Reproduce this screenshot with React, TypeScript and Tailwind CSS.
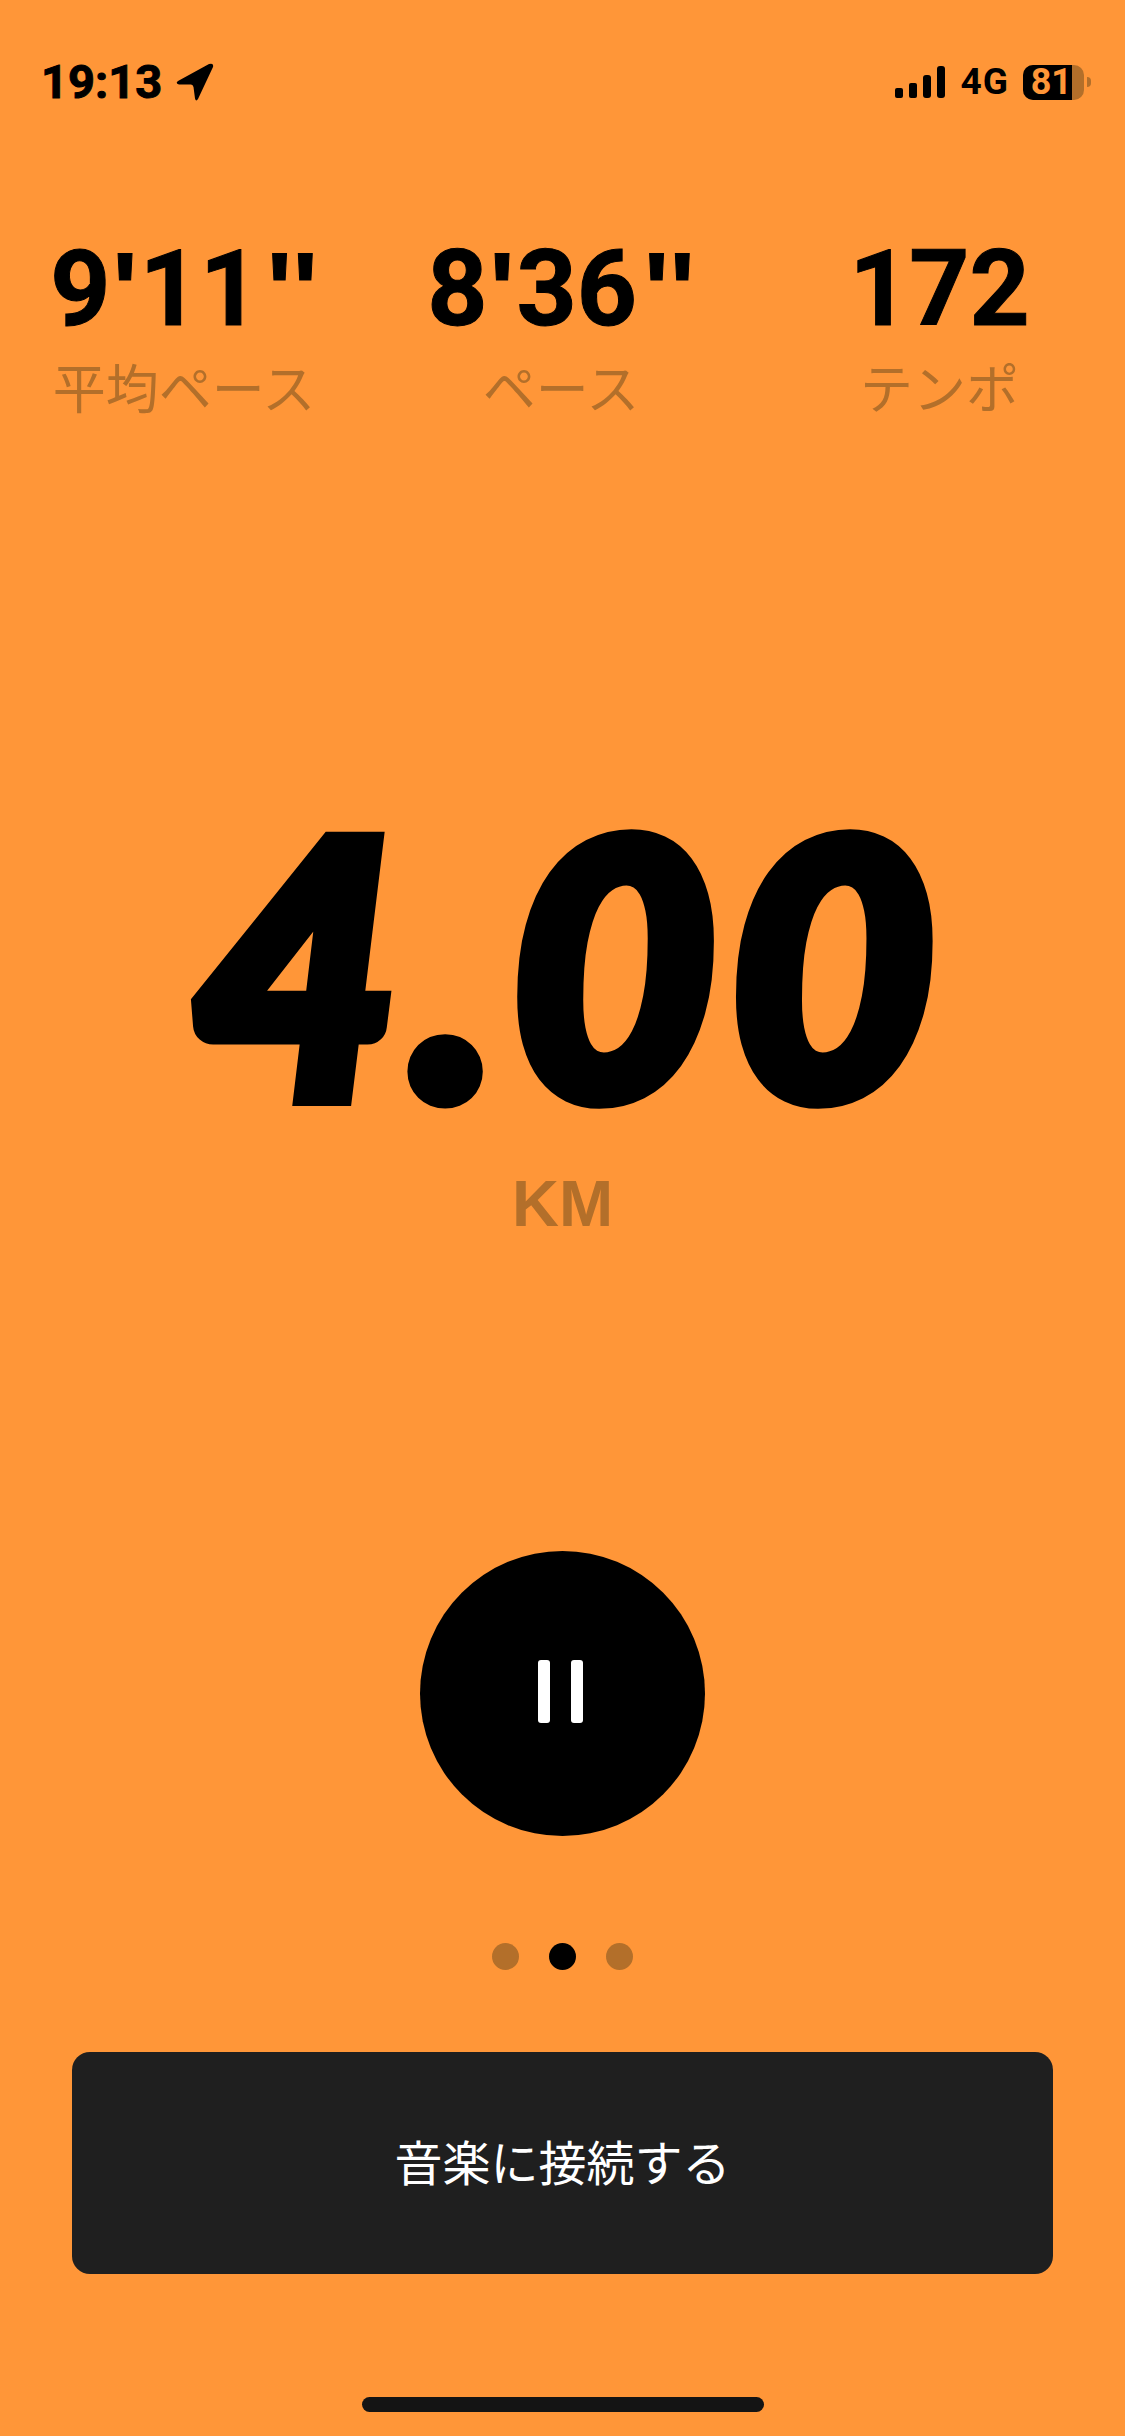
const SANS = "font-['Liberation_Sans','Noto_Sans_CJK_JP',sans-serif]";
const DIGITS = "font-['Roboto',sans-serif]";

function StatValue({ minutes, seconds }: { minutes: string; seconds: string }) {
  return (
    <span className={`${DIGITS} flex text-[105px] font-bold leading-[77px] text-black [-webkit-text-stroke:1px_#000]`}>
      {minutes}
      <span className={`${SANS} mx-[2px]`}>'</span>
      {seconds}
      <span className={`${SANS} ml-[7px]`}>'</span>
      <span className={`${SANS} ml-[1px]`}>'</span>
    </span>
  );
}

function StatusBar() {
  return (
    <div className="flex h-[38px] items-center justify-between pl-[41px] pr-[34px]">
      <div className="flex items-center gap-[14px]">
        <span className={`${DIGITS} text-[47px] font-bold leading-[38px] text-black [-webkit-text-stroke:1px_#000]`}>19:13</span>
        <svg width="38" height="38" viewBox="0 0 38 38" aria-hidden="true">
          <path
            d="M2 18 L33 1 Q38 -0.5 37 4 L22 36 Q20 39 19 35.5 L17.5 24 Q17 21.5 15 21.5 L3 21.5 Q-1 20.5 2 18 Z"
            fill="#000"
          />
        </svg>
      </div>
      <div className="flex items-center">
        <div className="flex h-[32px] items-end gap-[6px]">
          <div className="h-[10px] w-[8px] rounded-[2px] bg-black" />
          <div className="h-[15px] w-[8px] rounded-[2px] bg-black" />
          <div className="h-[23px] w-[8px] rounded-[3px] bg-black" />
          <div className="h-[32px] w-[8px] rounded-[3px] bg-black" />
        </div>
        <span className={`${DIGITS} ml-[16px] text-[37px] font-bold leading-[38px] tracking-[1px] text-black`}>4G</span>
        <div className="ml-[14px] flex items-center">
          <div className="flex h-[35px] w-[61px] rounded-[10px] bg-[#b36f2a]">
            <div className="flex h-full w-[49px] items-center justify-end rounded-l-[10px] bg-black">
              <span className={`${DIGITS} text-[36px] font-bold leading-[35px] text-[#ff9638]`}>81</span>
            </div>
          </div>
          <div className="ml-[3px] h-[10px] w-[4px] rounded-r-full bg-[#b36f2a]" />
        </div>
      </div>
    </div>
  );
}

export default function App() {
  return (
    <div className={`${SANS} flex h-[2436px] w-[1125px] flex-col overflow-hidden bg-[#ff9638] pt-[63px]`}>
      <StatusBar />

      <div className="mt-[150px] grid grid-cols-[368px_386px_371px]">
        <div className="flex flex-col items-center">
          <StatValue minutes="9" seconds="11" />
          <span className="mt-[38px] text-[53px] leading-[50px] text-[#b36f2a]">平均ペース</span>
        </div>
        <div className="flex flex-col items-center">
          <StatValue minutes="8" seconds="36" />
          <span className="mt-[38px] text-[53px] leading-[50px] text-[#b36f2a]">ペース</span>
        </div>
        <div className="flex flex-col items-center">
          <span className={`${DIGITS} text-[105px] font-bold leading-[77px] text-black [-webkit-text-stroke:1px_#000]`}>172</span>
          <span className="mt-[38px] text-[53px] leading-[50px] text-[#b36f2a]">テンポ</span>
        </div>
      </div>

      <div className="mt-[345px] flex flex-col items-center">
        <span className="ml-[17px] font-['Lato',sans-serif] text-[353px] font-black italic leading-[400px] tracking-[14px] text-black [-webkit-text-stroke:18px_#000]">
          4.00
        </span>
        <span className="mt-[19px] text-[65px] font-bold leading-[47px] text-[#b36f2a]">KM</span>
      </div>

      <button className="relative mx-auto mt-[324px] flex h-[285px] w-[285px] shrink-0 items-center justify-center gap-[21px] rounded-full bg-black pb-[4px] pr-[4px]">
        <span className="h-[63px] w-[12px] rounded-[3px] bg-white" />
        <span className="h-[63px] w-[12px] rounded-[3px] bg-white" />
      </button>

      <div className="mt-[107px] flex justify-center gap-[30px]">
        <span className="h-[27px] w-[27px] rounded-full bg-[#b36f2a]" />
        <span className="h-[27px] w-[27px] rounded-full bg-black" />
        <span className="h-[27px] w-[27px] rounded-full bg-[#b36f2a]" />
      </div>

      <button className="mx-[72px] mt-[82px] flex h-[222px] shrink-0 items-center justify-center rounded-[18px] bg-[#1f1f1f] pt-[4px] text-[48px] text-white">
        音楽に接続する
      </button>

      <div className="mx-auto mt-[123px] h-[15px] w-[402px] rounded-full bg-[#141414]" />
    </div>
  );
}
